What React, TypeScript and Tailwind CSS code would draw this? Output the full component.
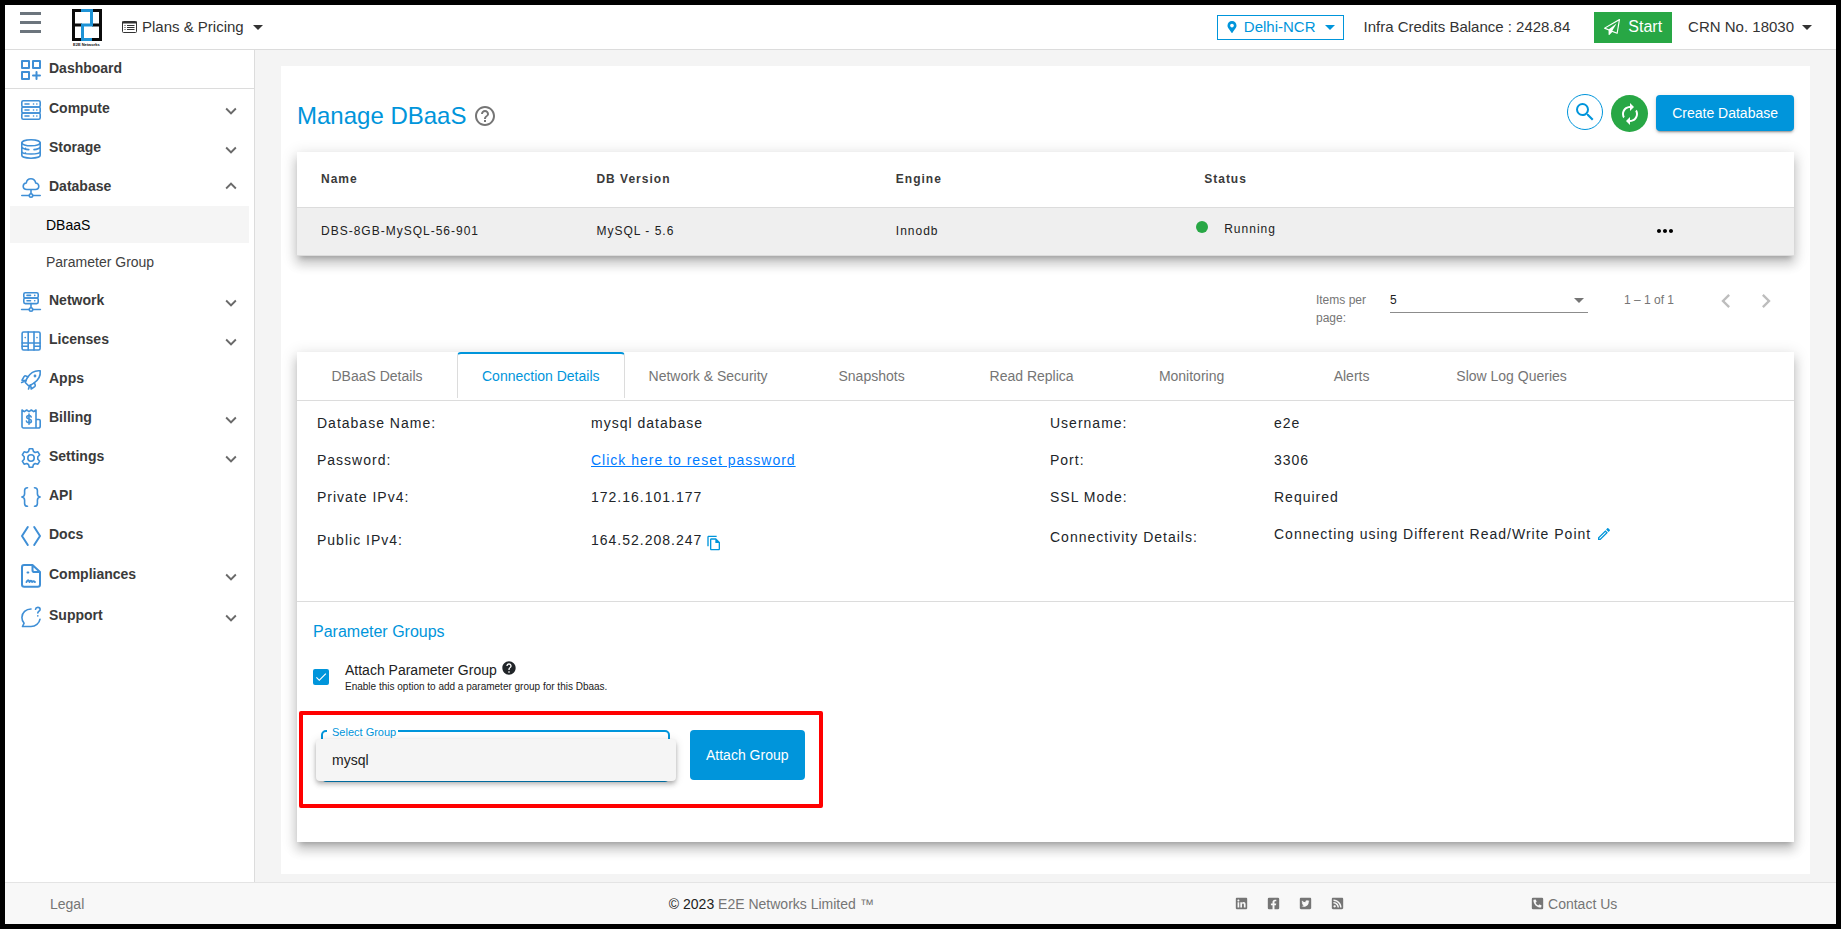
import type { ReactNode } from "react"
import {
  FaFacebookSquare,
  FaLinkedin,
  FaMapMarkerAlt,
  FaPhoneSquareAlt,
  FaRssSquare,
  FaTwitterSquare,
} from "react-icons/fa"
import {
  MdArrowDropDown,
  MdAutorenew,
  MdCheck,
  MdChevronLeft,
  MdChevronRight,
  MdExpandLess,
  MdExpandMore,
  MdHelp,
  MdHelpOutline,
  MdMoreHoriz,
  MdOutlineFileCopy,
  MdSearch,
} from "react-icons/md"

const CARD_SHADOW =
  "shadow-[0_5px_5px_-3px_rgba(0,0,0,0.2),0_8px_10px_1px_rgba(0,0,0,0.14),0_3px_14px_2px_rgba(0,0,0,0.12)]"

function SideIcon({ children }: { children: ReactNode }) {
  return (
    <svg
      viewBox="0 0 20 20"
      className="w-5 h-5 shrink-0 overflow-visible"
      fill="none"
      stroke="#3f8fd6"
      strokeWidth="1.6"
      strokeLinecap="round"
      strokeLinejoin="round"
      aria-hidden="true"
    >
      {children}
    </svg>
  )
}

const icons = {
  dashboard: (
    <SideIcon>
      <g strokeWidth="2">
        <rect x="1" y="1" width="7" height="7" />
        <rect x="12" y="1" width="7" height="7" />
        <rect x="1" y="12" width="7" height="7" />
        <path d="M15.5 12v7M12 15.5h7" />
      </g>
    </SideIcon>
  ),
  compute: (
    <SideIcon>
      <rect x="0.8" y="0.8" width="18.4" height="6.2" rx="1.5" />
      <rect x="0.8" y="7" width="18.4" height="6" rx="1.5" />
      <rect x="0.8" y="13" width="18.4" height="6.2" rx="1.5" />
      <path d="M4 4h4M4 10h4M4 16h4M12.5 4h.1M15.8 4h.1M12.5 10h.1M15.8 10h.1M12.5 16h.1M15.8 16h.1" />
    </SideIcon>
  ),
  storage: (
    <SideIcon>
      <ellipse cx="10" cy="3.8" rx="9.2" ry="3" />
      <path d="M.8 3.8v12.4c0 1.7 4.1 3 9.2 3s9.2-1.3 9.2-3V3.8M.8 8.2c1 1.3 4 2.2 7 2.4M19.2 8.2c-.8 1.2-3.2 2.1-6.2 2.4M.8 12.2c0 1.7 4.1 2.8 9.2 2.8s9.2-1.1 9.2-2.8M4.500 9.400v.1M4.500 14v.1" />
    </SideIcon>
  ),
  database: (
    <SideIcon>
      <path d="M6 11.5h8.3c2 0 3.5-1.4 3.5-3.2S16.4 5 14.7 5C14.2 2.5 12.3.8 9.9.8 7.4.8 5.6 2.6 5.3 5 3.5 5.1 2.2 6.5 2.2 8.3s1.6 3.2 3.8 3.2zM10 11.5v4.2M.8 17.5h7.4M11.8 17.5h7.4" />
      <circle cx="10" cy="17.5" r="1.7" />
    </SideIcon>
  ),
  network: (
    <SideIcon>
      <rect x="2.8" y=".8" width="14.4" height="5.2" rx="1.5" />
      <rect x="2.8" y="6" width="14.4" height="5.6" rx="1.5" />
      <path d="M6 3.4h3.5M13.7 3.4h.1M6 8.8h3.5M13.7 8.8h.1M10 11.6v4M.6 17.5h7.4M12 17.5h7.4" />
      <circle cx="10" cy="17.5" r="1.7" />
    </SideIcon>
  ),
  licenses: (
    <SideIcon>
      <rect x="1.1" y="1" width="18" height="18" rx="1.5" />
      <path d="M7.2 1v18M13 1v18M1.1 12h18M1.1 15.2h6.1M13 15.2h6.1M4.2 6.5v.1M16 6.5v.1" />
    </SideIcon>
  ),
  apps: (
    <SideIcon>
      <path d="M19.2.8C14 .2 9.5 2.8 6.500 7.5c-1 1.6-2 3.7-2.2 5l3.2 3.2c1.5-.3 3.4-1.2 5-2.3C17.3 10.2 19.8 6 19.2.8z" />
      <path d="M7 6.7 4.8 5.9c-.6-.2-1.2 0-1.6.5L1 10.2l4.2.4M13.4 12.7l.8 2.400c.2.600 0 1.200-.5 1.600L10.2 19l-.6-4M3 11.5.6 12.4M8.5 16l-1 3" />
      <circle cx="14" cy="6" r=".6" />
    </SideIcon>
  ),
  billing: (
    <SideIcon>
      <path d="M1 1l2.3 1.6L5.7 1 8 2.6 10.3 1l2.4 1.6L15 1v18H2.5C1.6 19 1 18.3 1 17.5zM15 10.5h3c.8 0 1.2.4 1.2 1.2v5.5c0 1.1-.8 1.8-2 1.8H15" />
      <path d="M10.2 8c-.3-1-1.2-1.5-2.3-1.5-1.2 0-2.2.6-2.2 1.7 0 2.5 4.7 1.1 4.7 3.7 0 1.2-1.1 1.9-2.4 1.9s-2.300-.6-2.600-1.7M8 5v10.3" />
    </SideIcon>
  ),
  settings: (
    <SideIcon>
      <circle cx="10" cy="10" r="3.2" />
      <path d="M8.3.8h3.4l.8 2.7 1.7 1 2.700-.7 1.8 3-1.9 2v2.4l1.9 2-1.8 3-2.7-.7-1.7 1-.8 2.7H8.3l-.8-2.7-1.700-1-2.700.7-1.800-3 1.900-2V8.800l-1.900-2 1.800-3 2.700.7 1.700-1z" />
    </SideIcon>
  ),
  api: (
    <SideIcon>
      <path d="M6.5.8C4.5.8 3.600 1.700 3.600 3.600v3.200c0 1.800-.8 3-2.800 3.200 2 .2 2.800 1.400 2.800 3.200v3.200c0 1.900.9 2.800 2.900 2.800M13.500.8c2 0 2.900.9 2.900 2.800v3.200c0 1.800.8 3 2.800 3.200-2 .2-2.800 1.400-2.800 3.200v3.200c0 1.900-.9 2.800-2.900 2.800" />
    </SideIcon>
  ),
  docs: (
    <SideIcon>
      <path strokeWidth="2" d="M6.8 1 1 10l5.8 9M13.2 1 19 10l-5.8 9" />
    </SideIcon>
  ),
  compliances: (
    <SideIcon>
      <g strokeWidth="2">
        <path d="M3-1h8.5L19 6v12.5c0 1.4-.8 2.2-2.2 2.2H3.2C1.8 20.7 1 19.9 1 18.5V1.2C1-.2 1.700-1 3-1zM11.5-1v5.2c0 1.2.6 1.8 1.8 1.8H19" />
        <path d="M6.500 6.500h.8M5.500 16c1-2.500 2.300-2.500 3 0 .8-1.800 2-1.800 2.600 0 .8-1 1.800-1 2.800 0" />
      </g>
    </SideIcon>
  ),
  support: (
    <SideIcon>
      <path d="M10 2C5 2 .9 5.7.9 10.500c0 2.200.8 4.200 2.200 5.700L1.500 19.500H10c4.500 0 8.300-3 9-7.300" />
      <path d="M14.5 2.300c.2-1.200 1.100-1.900 2.300-1.900 1.300 0 2.300.8 2.300 2 0 1.600-2.300 1.700-2.300 3.500M16.800 8.800v.1" />
    </SideIcon>
  ),
}

function Caret() {
  return (
    <svg viewBox="0 0 10 5" className="w-[10px] h-[5px]" fill="currentColor" aria-hidden="true">
      <path d="M0 0h10L5 5z" />
    </svg>
  )
}

type NavRowProps = {
  icon: ReactNode
  label: string
  arrow?: "up" | "down"
  height?: string
}

function NavRow({ icon, label, arrow, height = "h-[39px]" }: NavRowProps) {
  return (
    <a href="#" className={`flex items-center ${height} pl-4 pr-3 pb-[2px] font-bold text-[#3a3a3a]`}>
      <span className="pt-1">{icon}</span>
      <span className="pl-2 grow">{label}</span>
      {arrow === "down" && <MdExpandMore size={22} className="text-[#6a6a6a] mt-[6px]" />}
      {arrow === "up" && <MdExpandLess size={22} className="text-[#6a6a6a]" />}
    </a>
  )
}

function Sidebar() {
  return (
    <nav className="w-[250px] shrink-0 bg-white border-r border-[#dcdcdc] text-sm">
      <div className="border-b border-[#dcdcdc]">
        <NavRow icon={icons.dashboard} label="Dashboard" height="h-[38px]" />
      </div>
      <NavRow icon={icons.compute} label="Compute" arrow="down" />
      <NavRow icon={icons.storage} label="Storage" arrow="down" />
      <NavRow icon={icons.database} label="Database" arrow="up" />
      <a href="#" className="flex items-center h-[37px] mx-[5px] pl-9 bg-[#f5f5f5] text-black">
        DBaaS
      </a>
      <a href="#" className="flex items-center h-[38px] mx-[5px] pl-9 text-[#3f3f3f]">
        Parameter Group
      </a>
      <NavRow icon={icons.network} label="Network" arrow="down" />
      <NavRow icon={icons.licenses} label="Licenses" arrow="down" />
      <NavRow icon={icons.apps} label="Apps" />
      <NavRow icon={icons.billing} label="Billing" arrow="down" />
      <NavRow icon={icons.settings} label="Settings" arrow="down" />
      <NavRow icon={icons.api} label="API" />
      <NavRow icon={icons.docs} label="Docs" />
      <NavRow icon={icons.compliances} label="Compliances" arrow="down" height="h-[41px]" />
      <NavRow icon={icons.support} label="Support" arrow="down" height="h-[41px]" />
    </nav>
  )
}

function Logo() {
  return (
    <svg viewBox="0 0 30 38" className="w-[30px] h-[38px]" role="img" aria-label="E2E Networks">
      <g fill="none" strokeWidth="3">
        <path stroke="#0b0b0b" d="M10 1.500H1.500v29H10M1.500 16H10M20 1.500h8.500v29H20M20 16h8.500" />
        <path stroke="#1e93d6" d="M9 1.500h10.500V16h-9v14.500H20" />
      </g>
      <text x="1" y="37" fontSize="4" fontWeight="700" fill="#111" fontFamily="Liberation Sans, sans-serif">
        E2E Networks
      </text>
    </svg>
  )
}

function Header() {
  return (
    <header className="flex items-center h-[45px] bg-white border-b border-[#dcdcdc] text-[15px] text-[#333]">
      <button type="button" aria-label="Toggle menu" className="flex flex-col gap-[6px] ml-[15px] mb-[9px]">
        <span className="w-[21px] h-[3px] bg-[#6c757d]" />
        <span className="w-[21px] h-[3px] bg-[#6c757d]" />
        <span className="w-[21px] h-[3px] bg-[#6c757d]" />
      </button>
      <a href="#" className="ml-[31px] mt-[2px]">
        <Logo />
      </a>
      <button type="button" className="flex items-center ml-5">
        <svg viewBox="0 0 15 12" className="w-[15px] h-3" fill="none" stroke="#333" aria-hidden="true">
          <rect x=".5" y=".5" width="14" height="11" rx="1" />
          <path strokeWidth="2" d="M0 1.500h15" />
          <path d="M2.500 4.500h1M5 4.500h7.500M2.500 6.500h1M5 6.500h7.500M2.500 8.500h1M5 8.500h7.500" />
        </svg>
        <span className="ml-[5px] mr-[9px]">Plans &amp; Pricing</span>
        <Caret />
      </button>
      <div className="grow" />
      <button
        type="button"
        className="flex items-center h-[25px] px-2 border border-[#0095db] text-[#0095db]"
      >
        <FaMapMarkerAlt size={12} />
        <span className="ml-[6px] mr-[9px]">Delhi-NCR</span>
        <Caret />
      </button>
      <span className="ml-5">Infra Credits Balance : 2428.84</span>
      <button type="button" className="flex items-center h-[31px] ml-6 px-[10px] bg-[#28a745] text-white text-base">
        <svg viewBox="0 0 1792 1792" className="w-4 h-4" fill="currentColor" aria-hidden="true">
          <path d="M1764 11q33 24 27 64l-256 1536q-5 29-32 45-14 8-31 8-11 0-24-5l-527-215-298 327q-18 21-47 21-14 0-23-4-19-7-30-23.500t-11-36.500v-452l-472-193q-37-14-40-55-3-39 32-59l1664-960q35-21 68 2zm-342 1499l221-1323-1434 827 336 137 863-639-478 797z" />
        </svg>
        <span className="ml-2">Start</span>
      </button>
      <button type="button" className="flex items-center gap-2 ml-4 mr-6">
        CRN No. 18030
        <Caret />
      </button>
    </header>
  )
}

function DatabaseTable() {
  return (
    <table
      className={`w-full table-fixed bg-white text-xs tracking-[1px] text-left text-[#212121] ${CARD_SHADOW}`}
    >
      <thead>
        <tr className="h-[55px] border-b border-[#dcdcdc] text-[#3a3a3a]">
          <th className="pl-6 w-[18.4%]">Name</th>
          <th className="pl-6 w-[20%]">DB Version</th>
          <th className="pl-6 w-[20.6%]">Engine</th>
          <th className="pl-6 w-[30.1%]">Status</th>
          <th aria-label="Actions" />
        </tr>
      </thead>
      <tbody>
        <tr className="h-12 bg-[#efefef] border-b border-[#dcdcdc]">
          <td className="pl-6">DBS-8GB-MySQL-56-901</td>
          <td className="pl-6">MySQL - 5.6</td>
          <td className="pl-6">Innodb</td>
          <td className="pl-4 pb-1">
            <span className="flex items-center">
              <span className="w-3 h-3 mb-1 rounded-full bg-[#28a745]" />
              <span className="ml-4">Running</span>
            </span>
          </td>
          <td className="pl-[22px]">
            <button type="button" aria-label="More actions" className="block text-black">
              <MdMoreHoriz size={24} />
            </button>
          </td>
        </tr>
      </tbody>
    </table>
  )
}

function Paginator() {
  return (
    <div className="flex justify-end items-start h-24 pt-[35px] pr-2 text-xs leading-[18px] text-[#757575]">
      <label htmlFor="page-size" className="w-[58px]">
        Items per page:
      </label>
      <div className="relative w-[198px] ml-4 mr-9 border-b border-[#8c8c8c]">
        <select id="page-size" defaultValue="5" className="w-full h-[21px] pb-[3px] appearance-none bg-transparent text-[#212121]">
          <option value="5">5</option>
          <option value="10">10</option>
        </select>
        <MdArrowDropDown size={24} className="absolute -right-[3px] -top-[3px] pointer-events-none" />
      </div>
      <span>1 – 1 of 1</span>
      <button type="button" aria-label="Previous page" disabled className="w-10 ml-8 -mt-1 flex justify-center text-[#bdbdbd]">
        <MdChevronLeft size={28} />
      </button>
      <button type="button" aria-label="Next page" disabled className="w-10 -mt-1 flex justify-center text-[#bdbdbd]">
        <MdChevronRight size={28} />
      </button>
    </div>
  )
}

const tabs = [
  "DBaaS Details",
  "Connection Details",
  "Network & Security",
  "Snapshots",
  "Read Replica",
  "Monitoring",
  "Alerts",
  "Slow Log Queries",
]

function ConnectionDetails() {
  return (
    <dl className="grid grid-cols-[274fr_459fr_224fr_520fr] auto-rows-[37px] items-center pl-5 pt-1 pb-12 border-b border-[#dcdcdc] text-sm tracking-[1px] text-[#212529]">
      <dt>Database Name:</dt>
      <dd>mysql database</dd>
      <dt>Username:</dt>
      <dd>e2e</dd>

      <dt>Password:</dt>
      <dd>
        <a href="#" className="text-[#007bff] underline">
          Click here to reset password
        </a>
      </dd>
      <dt>Port:</dt>
      <dd>3306</dd>

      <dt>Private IPv4:</dt>
      <dd>172.16.101.177</dd>
      <dt>SSL Mode:</dt>
      <dd>Required</dd>

      <dt className="pt-3">Public IPv4:</dt>
      <dd className="flex items-center pt-3">
        164.52.208.247
        <button type="button" aria-label="Copy public IPv4" className="ml-1 mt-[6px] text-[#0095db]">
          <MdOutlineFileCopy size={16} />
        </button>
      </dd>
      <dt className="pt-[6px]">Connectivity Details:</dt>
      <dd className="flex items-center">
        Connecting using Different Read/Write Point
        <button type="button" aria-label="Edit connectivity" className="ml-[5px] text-[#0095db]">
          <svg viewBox="0 0 24 24" className="w-4 h-4" fill="currentColor" aria-hidden="true">
            <path d="M3 17.250V21h3.750L17.810 9.940l-3.750-3.750zM5.920 19H5v-.920l9.060-9.060.920.920zM20.710 5.630l-2.340-2.340c-.2-.2-.450-.290-.710-.290s-.510.100-.700.290l-1.830 1.830 3.750 3.750 1.830-1.830c.390-.390.390-1.020 0-1.410z" />
          </svg>
        </button>
      </dd>
    </dl>
  )
}

function ParameterGroups() {
  return (
    <section className="pt-[18px] pb-[34px] text-sm text-[#212121]">
      <h2 className="pl-4 text-base leading-6 text-[#0095db]">Parameter Groups</h2>
      <div className="flex items-center pl-4 mt-4">
        <span className="relative w-4 h-4">
          <input
            id="attach-group"
            type="checkbox"
            defaultChecked
            className="block w-4 h-4 appearance-none rounded-xs bg-[#0095db]"
          />
          <MdCheck size={14} className="absolute left-px top-px text-white pointer-events-none" />
        </span>
        <label htmlFor="attach-group" className="ml-4">
          <span className="flex items-center leading-5">
            Attach Parameter Group
            <MdHelp size={16} className="ml-1 mb-[3px] text-[#212529]" />
          </span>
          <span className="block text-[10px] leading-[14px]">
            Enable this option to add a parameter group for this Dbaas.
          </span>
        </label>
      </div>

      {/* Highlighted picker */}
      <div className="flex items-start w-fit h-[97px] ml-[2px] mt-[17px] pt-[15px] pl-[18px] pr-[14px] border-4 border-[#f00] rounded-xs">
        <div className="relative w-[349px]">
          <select
            id="select-group"
            defaultValue="mysql"
            className="block w-full h-[52px] px-3 appearance-none bg-white border-2 border-[#0095db] rounded-[5px]"
          >
            <option value="mysql">mysql</option>
          </select>
          <label
            htmlFor="select-group"
            className="absolute left-[6px] -top-[6px] pl-[5px] pr-[2px] bg-white text-[11px] leading-4 text-[#0095db]"
          >
            Select Group
          </label>
          <ul
            role="listbox"
            aria-label="Select Group"
            className="absolute -left-[5px] top-[9px] w-[360px] rounded-[4px] bg-[#f5f5f5] shadow-[0_2px_4px_-1px_rgba(0,0,0,0.2),0_4px_5px_0_rgba(0,0,0,0.14),0_1px_10px_0_rgba(0,0,0,0.12)]"
          >
            <li role="option" aria-selected="true" className="flex items-center h-[42px] px-4">
              mysql
            </li>
          </ul>
        </div>
        <button type="button" className="h-[50px] ml-5 px-4 rounded-[4px] bg-[#0095db] text-white">
          Attach Group
        </button>
      </div>
    </section>
  )
}

function DetailsCard() {
  return (
    <div className={`bg-white ${CARD_SHADOW}`}>
      <div role="tablist" className="flex items-start h-[49px] border-b border-[#dcdcdc] text-sm">
        {tabs.map((tab) => (
          <button
            key={tab}
            type="button"
            role="tab"
            aria-selected={tab === "Connection Details"}
            className={
              tab === "Connection Details"
                ? "h-[46px] min-w-[160px] px-6 rounded-t-[4px] border-x border-[#dcdcdc] border-t-2 border-t-[#0095db] text-[#0095db]"
                : "h-12 min-w-[160px] px-6 text-[#757575]"
            }
          >
            {tab}
          </button>
        ))}
      </div>
      <ConnectionDetails />
      <ParameterGroups />
    </div>
  )
}

function Footer() {
  return (
    <footer className="grid grid-cols-[250fr_337fr_229fr_82fr_102fr] items-center h-[42px] bg-[#f8f8f8] border-t border-[#e4e4e4] text-sm text-[#757575]">
      <a href="#" className="pl-[45px]">
        Legal
      </a>
      <p className="text-center">
        <span className="text-[#212121]">© 2023</span> E2E Networks Limited ™
      </p>
      <div className="flex justify-center gap-[19px]">
        <a href="#" aria-label="LinkedIn">
          <FaLinkedin size={13} />
        </a>
        <a href="#" aria-label="Facebook">
          <FaFacebookSquare size={13} />
        </a>
        <a href="#" aria-label="Twitter">
          <FaTwitterSquare size={13} />
        </a>
        <a href="#" aria-label="RSS">
          <FaRssSquare size={13} />
        </a>
      </div>
      <a href="#" className="flex items-center justify-center whitespace-nowrap">
        <FaPhoneSquareAlt size={13} className="mr-1" />
        Contact Us
      </a>
    </footer>
  )
}

export default function App() {
  return (
    <div className="min-h-screen flex flex-col border-[5px] border-black bg-[#f4f4f4] font-['Liberation_Sans',Arial,sans-serif]">
      <Header />
      <div className="flex grow">
        <Sidebar />
        <main className="grow min-w-0 px-[26px] pt-4 pb-2">
          <div className="h-full bg-white px-4 pt-7 pb-8">
            {/* Page title and actions */}
            <div className="flex items-center mb-5">
              <h1 className="flex items-center pt-[6px] text-2xl text-[#0095db]">
                Manage DBaaS
                <MdHelpOutline size={24} className="ml-[7px] text-[#757575]" />
              </h1>
              <div className="grow" />
              <button
                type="button"
                aria-label="Search"
                className="flex items-center justify-center w-9 h-9 mb-[2px] rounded-full border border-[#0095db] text-[#0095db]"
              >
                <MdSearch size={24} />
              </button>
              <button
                type="button"
                aria-label="Refresh"
                className="flex items-center justify-center w-[37px] h-[37px] ml-2 mt-[1px] rounded-full bg-[#28a745] text-white"
              >
                <MdAutorenew size={24} />
              </button>
              <button
                type="button"
                className="h-9 ml-2 px-4 rounded-[4px] bg-[#0095db] text-sm text-white shadow-[0_3px_1px_-2px_rgba(0,0,0,0.2),0_2px_2px_0_rgba(0,0,0,0.14),0_1px_5px_0_rgba(0,0,0,0.12)]"
              >
                Create Database
              </button>
            </div>
            <DatabaseTable />
            <Paginator />
            <DetailsCard />
          </div>
        </main>
      </div>
      <Footer />
    </div>
  )
}
